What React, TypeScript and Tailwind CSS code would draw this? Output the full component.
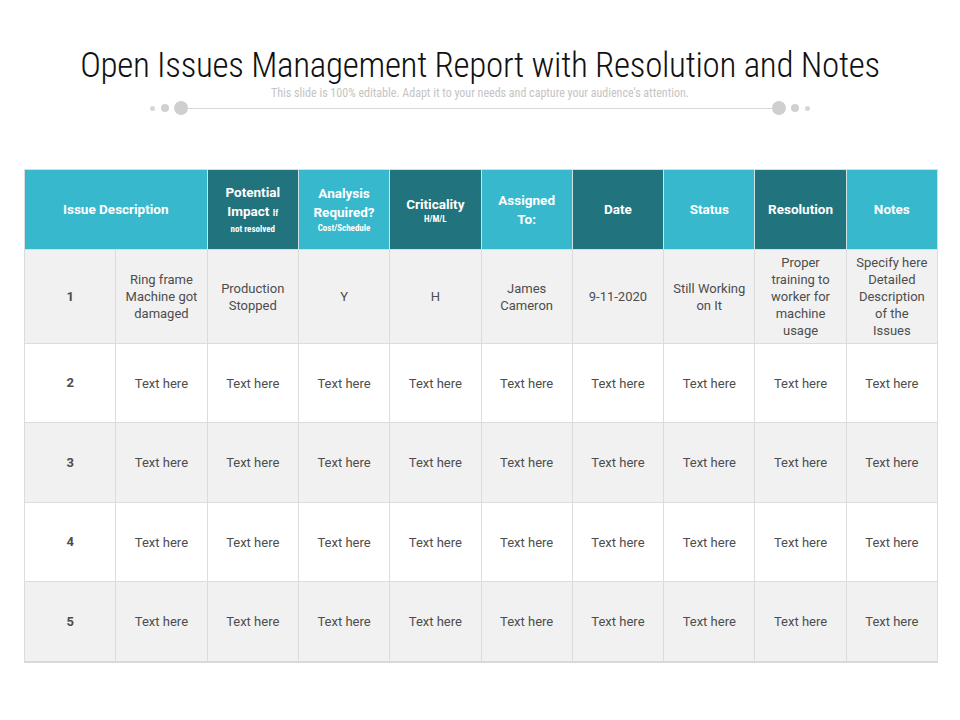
import React from "react";

const COND = { fontFamily: '"Roboto Condensed", "Liberation Sans Narrow", Roboto, sans-serif' };
const BODY = { fontFamily: 'Roboto, "Liberation Sans", sans-serif' };
const LIGHT = "bg-[#37b8cd]";
const DARK = "bg-[#21737e]";

const rowHeights = ["h-[94px]", "h-[79px]", "h-[80px]", "h-[79px]", "h-[80px]"];

const row1 = [
  "Ring frame Machine got damaged",
  "Production Stopped",
  "Y",
  "H",
  "James Cameron",
  "9-11-2020",
  "Still Working on It",
  "Proper training to worker for machine usage",
  "Specify here Detailed Description of the Issues",
];

export default function App() {
  return (
    <div className="w-[960px] h-[720px] bg-white relative overflow-hidden" style={COND}>
      <div className="flex flex-col items-center pt-[43px]">
        <h1 className="text-[35px] leading-[45px] text-[#111111] font-light tracking-[-0.3px]">
          Open Issues Management Report with Resolution and Notes
        </h1>
        <p className="text-[12px] leading-[14px] text-[#c4c4c4] mt-[-2px]">
          This slide is 100% editable. Adapt it to your needs and capture your audience's attention.
        </p>
        <div className="flex items-center mt-[1px] w-[660px]">
          <span className="w-[5px] h-[5px] rounded-full bg-[#d6d6d6]" />
          <span className="w-[8px] h-[8px] rounded-full bg-[#d0d0d0] ml-[6px]" />
          <span className="w-[14px] h-[14px] rounded-full bg-[#cfcfcf] ml-[5px]" />
          <span className="flex-1 h-px bg-[#d9d9d9]" />
          <span className="w-[14px] h-[14px] rounded-full bg-[#cfcfcf]" />
          <span className="w-[8px] h-[8px] rounded-full bg-[#d0d0d0] ml-[5px]" />
          <span className="w-[5px] h-[5px] rounded-full bg-[#d6d6d6] ml-[6px]" />
        </div>
      </div>

      <div className="mx-[24px] mt-[54px] w-[914px] border-l border-t border-[#dcdcdc] border-b-2 border-b-[#d8d8d8]">
        {/* header */}
        <div className="grid grid-cols-10 h-[79px] text-white font-bold" style={BODY}>
          <div className={`col-span-2 ${LIGHT} flex items-center justify-center text-[13.5px] border-r border-[#cfe3e6]`}>
            Issue Description
          </div>
          <div className={`${DARK} flex flex-col items-center justify-center text-center border-r border-[#cfe3e6]`}>
            <span className="text-[13.5px] leading-[19px]">Potential</span>
            <span className="text-[13.5px] leading-[19px]">
              Impact <span className="text-[9px]" style={COND}>If</span>
            </span>
            <span className="text-[9px] leading-[13px]" style={COND}>not resolved</span>
          </div>
          <div className={`${LIGHT} flex flex-col items-center justify-center text-center border-r border-[#cfe3e6]`}>
            <span className="text-[13.5px] leading-[19px]">Analysis</span>
            <span className="text-[13.5px] leading-[19px]">Required?</span>
            <span className="text-[9px] leading-[13px]" style={COND}>Cost/Schedule</span>
          </div>
          <div className={`${DARK} flex flex-col items-center justify-center text-center border-r border-[#cfe3e6]`}>
            <span className="text-[13.5px] leading-[18px]">Criticality</span>
            <span className="text-[9px] leading-[12px]" style={COND}>H/M/L</span>
          </div>
          <div className={`${LIGHT} flex flex-col items-center justify-center text-center border-r border-[#cfe3e6]`}>
            <span className="text-[13.5px] leading-[19px]">Assigned</span>
            <span className="text-[13.5px] leading-[19px]">To:</span>
          </div>
          <div className={`${DARK} flex items-center justify-center text-[13.5px] border-r border-[#cfe3e6]`}>Date</div>
          <div className={`${LIGHT} flex items-center justify-center text-[13.5px] border-r border-[#cfe3e6]`}>Status</div>
          <div className={`${DARK} flex items-center justify-center text-[13.5px] border-r border-[#cfe3e6]`}>Resolution</div>
          <div className={`${LIGHT} flex items-center justify-center text-[13.5px] border-r border-[#dcdcdc]`}>Notes</div>
        </div>

        {[0, 1, 2, 3, 4].map((r) => (
          <div
            key={r}
            style={BODY}
            className={`grid grid-cols-10 ${rowHeights[r]} ${r % 2 === 0 ? "bg-[#f1f1f1]" : "bg-white"} text-[13px] text-[#4d4d4d]`}
          >
            <div className="flex items-center justify-center font-bold border-r border-t border-[#dcdcdc]">{r + 1}</div>
            {(r === 0 ? row1 : Array(9).fill("Text here")).map((t, i) => (
              <div
                key={i}
                className="flex items-center justify-center text-center px-[9px] leading-[17px] border-r border-t border-[#dcdcdc]"
              >
                {t}
              </div>
            ))}
          </div>
        ))}
      </div>
    </div>
  );
}
